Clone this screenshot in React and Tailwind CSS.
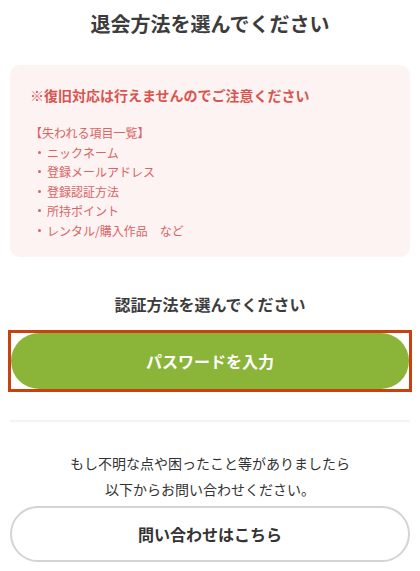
import React from "react";

const items = ["ニックネーム", "登録メールアドレス", "登録認証方法", "所持ポイント", "レンタル/購入作品　など"];

export default function App() {
  return (
    <div className="w-[420px] h-[571px] bg-white overflow-hidden text-[#333]" style={{ fontFamily: '"Noto Sans CJK JP", "Noto Sans", sans-serif' }}>
      <h1 className="pt-[8px] text-center text-[20px] leading-[32px] font-bold text-[#3c3c3c]">退会方法を選んでください</h1>
      <div className="mx-[10px] mt-[25px] h-[192px] rounded-[10px] bg-[#fdf3f3] px-[20px] pt-[20px]">
        <p className="text-[14px] leading-[21px] font-bold text-[#d9534f]">※復旧対応は行えませんのでご注意ください</p>
        <p className="mt-[17px] text-[12px] leading-[19.5px] text-[#d96464]">【失われる項目一覧】</p>
        <ul className="text-[12px] leading-[19.5px] text-[#d96464]">
          {items.map((t) => (
            <li key={t} className="flex items-center pl-[8px]">
              <span className="mr-[6px] h-[3px] w-[3px] rounded-full bg-[#d96464]" />
              <span>{t}</span>
            </li>
          ))}
        </ul>
      </div>
      <h2 className="mt-[35px] text-center text-[16px] leading-[24px] font-bold text-[#3c3c3c]">認証方法を選んでください</h2>
      <div className="mx-[8px] mt-[14px] h-[62px] border-[3px] border-[#c8410f]">
        <button className="flex h-full w-full items-center justify-center rounded-full bg-[#8ab538] text-[16px] font-bold text-white">パスワードを入力</button>
      </div>
      <div className="mx-[10px] mt-[28px] h-[2px] bg-[#f3f3f3]" />
      <p className="mt-[28px] text-center text-[14px] leading-[26px] text-[#333]">
        もし不明な点や困ったこと等がありましたら
        <br />
        以下からお問い合わせください。
      </p>
      <button className="mx-[10px] mt-[4px] flex h-[56px] w-[400px] items-center justify-center rounded-full border-[2px] border-[#d4d4d4] bg-white text-[16px] font-bold text-[#333]">問い合わせはこちら</button>
    </div>
  );
}
